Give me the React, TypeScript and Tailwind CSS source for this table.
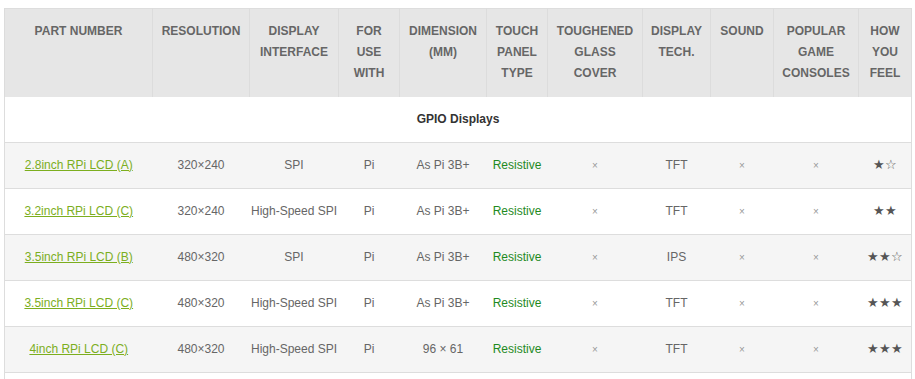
const headers: string[][] = [
  ["PART NUMBER"],
  ["RESOLUTION"],
  ["DISPLAY", "INTERFACE"],
  ["FOR", "USE", "WITH"],
  ["DIMENSION", "(MM)"],
  ["TOUCH", "PANEL", "TYPE"],
  ["TOUGHENED", "GLASS", "COVER"],
  ["DISPLAY", "TECH."],
  ["SOUND"],
  ["POPULAR", "GAME", "CONSOLES"],
  ["HOW", "YOU", "FEEL"],
];

const widths = [148, 97, 89, 61, 87, 61, 95, 68, 63, 85, 53];

interface Row {
  part: string;
  res: string;
  iface: string;
  use: string;
  dim: string;
  touch: string;
  tech: string;
  stars: string;
}

const rows: Row[] = [
  { part: "2.8inch RPi LCD (A)", res: "320×240", iface: "SPI", use: "Pi", dim: "As Pi 3B+", touch: "Resistive", tech: "TFT", stars: "★☆" },
  { part: "3.2inch RPi LCD (C)", res: "320×240", iface: "High-Speed SPI", use: "Pi", dim: "As Pi 3B+", touch: "Resistive", tech: "TFT", stars: "★★" },
  { part: "3.5inch RPi LCD (B)", res: "480×320", iface: "SPI", use: "Pi", dim: "As Pi 3B+", touch: "Resistive", tech: "IPS", stars: "★★☆" },
  { part: "3.5inch RPi LCD (C)", res: "480×320", iface: "High-Speed SPI", use: "Pi", dim: "As Pi 3B+", touch: "Resistive", tech: "TFT", stars: "★★★" },
  { part: "4inch RPi LCD (C)", res: "480×320", iface: "High-Speed SPI", use: "Pi", dim: "96 × 61", touch: "Resistive", tech: "TFT", stars: "★★★" },
];

const Cross = () => <span className="text-[10px] text-[#999]">×</span>;

export default function App() {
  return (
    <div className="min-h-screen bg-white pl-[4px] pt-[8px] font-['Liberation_Sans',Arial,sans-serif] text-[12px] text-[#666]">
      <table className="w-[907px] table-fixed border-collapse border border-[#ddd]">
        <colgroup>
          {widths.map((w, i) => (
            <col key={i} style={{ width: w }} />
          ))}
        </colgroup>
        <thead>
          <tr className="h-[88px] bg-[#e6e6e6]">
            {headers.map((lines, i) => (
              <th
                key={i}
                className="border-x border-[#dcdcdc] px-1 pt-[12px] align-top text-[12px] font-bold leading-[21px] text-[#666]"
              >
                {lines.map((l) => (
                  <div key={l}>{l}</div>
                ))}
              </th>
            ))}
          </tr>
        </thead>
        <tbody>
          {/* section title */}
          <tr className="h-[46px] border-b border-[#ddd] bg-white">
            <td colSpan={11} className="text-center font-bold text-[#333]">
              GPIO Displays
            </td>
          </tr>
          {rows.map((r, i) => (
            <tr
              key={r.part}
              className={`h-[46px] border-b border-[#ddd] text-center ${i % 2 === 0 ? "bg-[#f5f5f5]" : "bg-white"}`}
            >
              <td className="pb-[2px]">
                <a className="text-[#7cae1e] underline">{r.part}</a>
              </td>
              <td className="pb-[2px]">{r.res}</td>
              <td className="pb-[2px]">{r.iface}</td>
              <td className="pb-[2px]">{r.use}</td>
              <td className="pb-[2px]">{r.dim}</td>
              <td className="pb-[2px] text-[#1f8a1f]">{r.touch}</td>
              <td className="pb-[2px]">
                <Cross />
              </td>
              <td className="pb-[2px]">{r.tech}</td>
              <td className="pb-[2px]">
                <Cross />
              </td>
              <td className="pb-[2px]">
                <Cross />
              </td>
              <td className="pb-[2px] text-[13px] text-[#555]">{r.stars}</td>
            </tr>
          ))}
          <tr className="h-[20px] bg-white">
            <td colSpan={11} />
          </tr>
        </tbody>
      </table>
    </div>
  );
}
